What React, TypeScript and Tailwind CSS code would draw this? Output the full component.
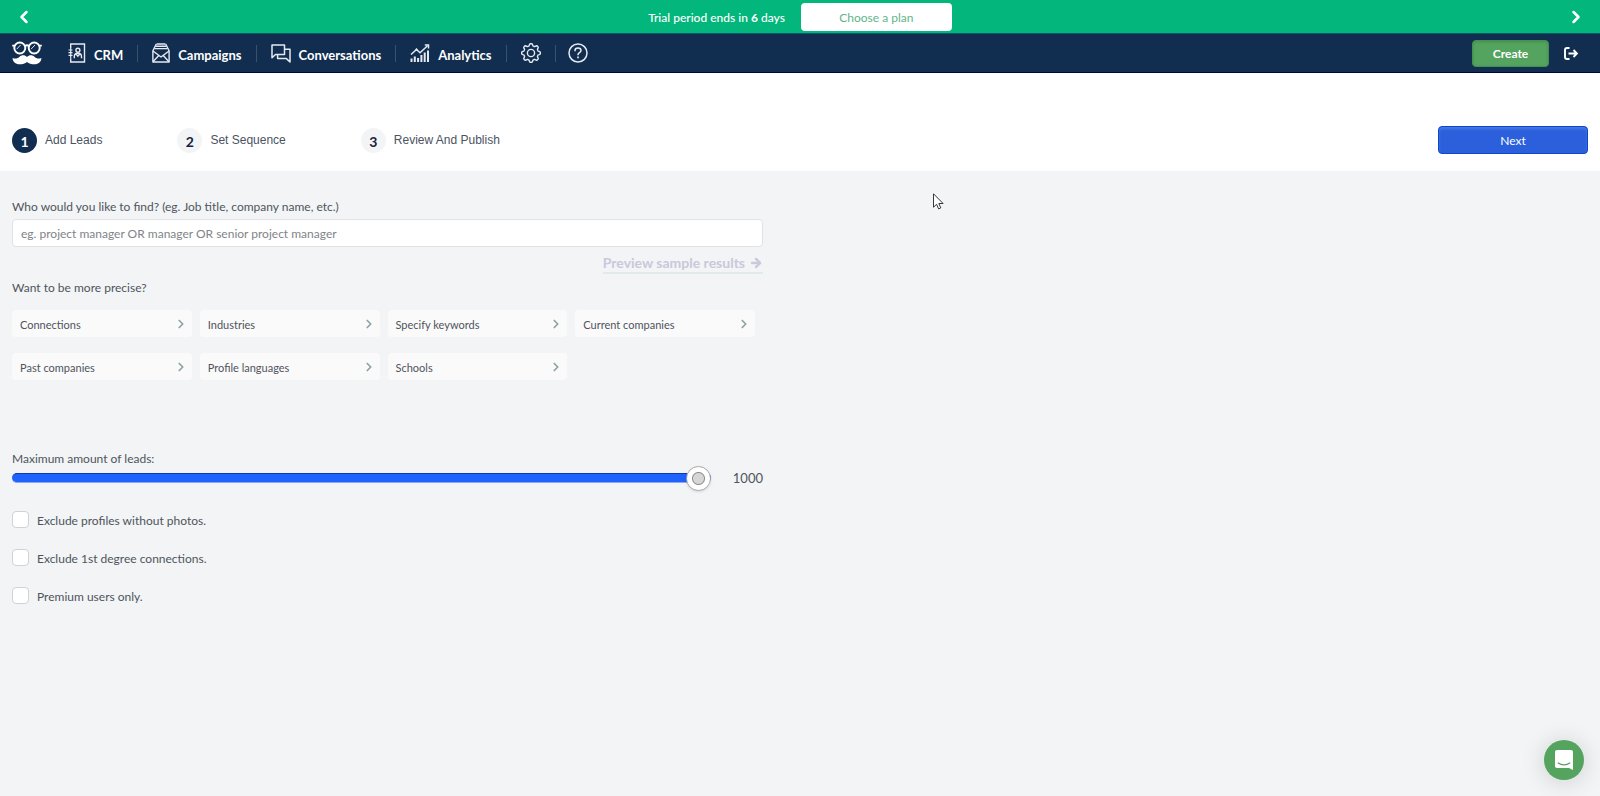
import { useState } from 'react';
import type { ReactNode } from 'react';

// Icons
import { ChevronLeft, ChevronRight, ArrowRight } from 'lucide-react';

const LogoIcon = () => (
  <svg viewBox="0 0 30 24" className="w-[30px] h-6" fill="none">
    <g stroke="#fff" strokeWidth="1.9">
      <circle cx="7.800" cy="7" r="5.500" />
      <circle cx="22.200" cy="7" r="5.500" />
      <path d="M0.200 4.600h3M26.800 4.600h3M12.800 5c1.300-1 3.100-1 4.400 0" />
    </g>
    <path d="M5 7.800l3.400-3.600M19.400 7.800l3.400-3.600" stroke="#dfe5ec" strokeWidth="1" strokeLinecap="round" />
    <path
      d="M15 16C13 13.600 9.500 13.600 7.600 15.700 6 17.400 3.600 18.100.600 17 .500 20.400 3.500 23.300 7.500 23.300c3.200 0 5.800-.8 7.500-2.400 1.700 1.600 4.300 2.400 7.500 2.400 4 0 7-2.900 6.900-6.300-3 1.100-5.400.4-7-1.300C20.500 13.600 17 13.600 15 16z"
      fill="#fff"
    />
  </svg>
);

const CrmIcon = () => (
  <svg viewBox="0 0 18 20" className="w-[18px] h-5" fill="none" stroke="#e6eaf0" strokeWidth="1.400">
    <path d="M2.700 5V1h13.800v18H2.700v-3.500" />
    <path d="M0.500 7h4M0.500 9.700h4M0.500 12.400h4M2.700 5v10.500" strokeWidth="1.200" />
    <circle cx="9.900" cy="7.200" r="2" />
    <path d="M6.300 15.200v-1.800c0-2 1.600-3.200 3.600-3.200s3.600 1.200 3.600 3.200v1.800M8 11l1.900 2.200 1.900-2.200" />
  </svg>
);

const CampaignsIcon = () => (
  <svg viewBox="0 0 18 20" className="w-[18px] h-5" fill="none" stroke="#e6eaf0" strokeWidth="1.400" strokeLinejoin="round">
    <path d="M4.500 1h9M3.600 3.300h10.800M2.500 5.600h13" />
    <path d="M4.300 1L0.900 7.700V19h16.200V7.700L13.700 1" />
    <path d="M1 8l8 6 8-6M1 18.800l5.800-6.200M17 18.800l-5.800-6.200" />
  </svg>
);

const ConversationsIcon = () => (
  <svg viewBox="0 0 20 19" className="w-5 h-[19px]" fill="none" stroke="#e6eaf0" strokeWidth="1.500" strokeLinejoin="round">
    <path d="M1 1h12.500v9.500H4.500L1 13.800z" />
    <path d="M13.800 5.200H19V18l-3.600-3.400H6.600v-4" />
  </svg>
);

const AnalyticsIcon = () => (
  <svg viewBox="0 0 20 19" className="w-5 h-[19px]" fill="none" stroke="#e6eaf0">
    <path d="M1.500 14.500V18M4.800 12.500V18M8.100 14v4M11.400 11V18M14.700 8.500V18M18 6.500V18" strokeWidth="2" />
    <path d="M1 10.500l5.500-5 3.500 3.300L17.500 1.800" strokeWidth="1.500" />
    <path d="M14.800 1h3.700v3.600" strokeWidth="1.500" />
    <circle cx="6.500" cy="5.500" r="0.800" />
  </svg>
);

// Eight rounded teeth around the centre
const gearPoints = Array.from({ length: 96 }, (_, i) => {
  const angle = (i / 96) * Math.PI * 2;
  const radius = 8.3 + 1.1 * Math.tanh(2 * Math.cos(8 * angle));
  return `${(10 + radius * Math.sin(angle)).toFixed(2)},${(10 - radius * Math.cos(angle)).toFixed(2)}`;
}).join(' ');

const GearIcon = () => (
  <svg viewBox="0 0 20 20" className="size-5" fill="none" stroke="#e6eaf0" strokeWidth="1.400" strokeLinejoin="round">
    <polygon points={gearPoints} />
    <circle cx="10" cy="10" r="3.600" />
  </svg>
);

const HelpIcon = () => (
  <svg viewBox="0 0 20 20" className="size-5" fill="none" stroke="#e6eaf0" strokeWidth="1.500">
    <circle cx="10" cy="10" r="9" />
    <path d="M7 8.200V7.500c0-1.400 1.300-2.500 3-2.500s3 1 3 2.500c0 2.300-3 2-3 4.300v.5" />
    <path d="M10 13.600v1.700" strokeWidth="1.700" />
  </svg>
);

const LogoutIcon = () => (
  <svg viewBox="0 0 14 13" className="w-3.5 h-[13px]" fill="none" stroke="#fff" strokeWidth="1.900">
    <path d="M5.500 1H3C1.600 1 1 1.600 1 3v7c0 1.400.6 2 2 2h2.500" />
    <path d="M4.500 6.500H13M9.500 3l3.400 3.500L9.500 10" />
  </svg>
);

const ChatIcon = () => (
  <svg viewBox="0 0 18 20" className="w-[18px] h-5" fill="none">
    <path d="M2 0h14c1.200 0 2 .8 2 2v18l-4-2H2c-1.200 0-2-.8-2-2V2C0 .8.800 0 2 0z" fill="#fff" />
    <path d="M3.200 13c3.200 2.400 8.400 2.400 11.600 0" stroke="#54a35e" strokeWidth="1.200" strokeLinecap="round" />
  </svg>
);

const CursorIcon = () => (
  <svg viewBox="0 0 11 17" className="w-[11px] h-[17px]">
    <path d="M.5.800v13.400l3.100-2.900 2 4.600 2.200-1-2-4.400h4.300z" fill="#fff" stroke="#222" strokeWidth="0.900" />
  </svg>
);

type NavItemProps = { icon: ReactNode; label?: string; title: string };

const NavItem = ({ icon, label, title }: NavItemProps) => (
  <a href="#" aria-label={title} className="flex items-center px-3.5 last:px-3 not-first:border-l border-[#3c5068] h-[17px] gap-2">
    {icon}
    {label && <span className="mt-1">{label}</span>}
  </a>
);

const navItems: NavItemProps[] = [
  { icon: <CrmIcon />, label: 'CRM', title: 'CRM' },
  { icon: <CampaignsIcon />, label: 'Campaigns', title: 'Campaigns' },
  { icon: <ConversationsIcon />, label: 'Conversations', title: 'Conversations' },
  { icon: <AnalyticsIcon />, label: 'Analytics', title: 'Analytics' },
  { icon: <GearIcon />, title: 'Settings' },
  { icon: <HelpIcon />, title: 'Help' },
];

const steps = ['Add Leads', 'Set Sequence', 'Review And Publish'];

const filters = [
  'Connections',
  'Industries',
  'Specify keywords',
  'Current companies',
  'Past companies',
  'Profile languages',
  'Schools',
];

const options = ['Exclude profiles without photos.', 'Exclude 1st degree connections.', 'Premium users only.'];

export default function App() {
  const [maxLeads, setMaxLeads] = useState(1000);

  return (
    <div className="min-h-screen bg-[#f2f4f6] font-['Lato',sans-serif] text-xs leading-4 text-[#4f545c]">
      {/* Trial banner */}
      <div className="flex items-center justify-between h-[33px] px-3.5 bg-[#03b67c] text-white">
        <button aria-label="Previous"><ChevronLeft className="size-5" strokeWidth={3} /></button>
        <div className="flex items-center gap-4">
          <span className="font-medium mt-0.5">Trial period ends in <b>6</b> days</span>
          <button className="w-[151px] h-7 pt-0.5 rounded-sm bg-white text-[#60b58a]">Choose a plan</button>
        </div>
        <button aria-label="Next message"><ChevronRight className="size-5" strokeWidth={3} /></button>
      </div>

      {/* Main navigation */}
      <header className="flex items-center justify-between h-10 pl-3 pr-[22px] bg-[#112e51] border-t border-b border-t-[#0a5a63] border-b-[#03063a] text-white">
        <div className="flex items-center">
          <a href="#" aria-label="Home"><LogoIcon /></a>
          <nav className="flex items-center ml-3 text-[13px] font-bold">
            {navItems.map((item) => (
              <NavItem key={item.title} {...item} />
            ))}
          </nav>
        </div>
        <div className="flex items-center gap-[15px]">
          <button className="w-[77px] h-[27px] pt-0.5 rounded-sm bg-[#54a35e] border border-[#468f52] shadow-[inset_0_1px_3px_#458f50] font-bold">Create</button>
          <button aria-label="Log out"><LogoutIcon /></button>
        </div>
      </header>

      {/* Steps */}
      <section className="flex items-end justify-between h-[98px] px-3 pb-[17px] bg-white">
        <ol className="flex items-center h-7 gap-[75px]">
          {steps.map((step, index) => (
            <li key={step} className="flex items-center gap-2">
              <span
                className={
                  index === 0
                    ? 'flex items-center justify-center size-[25px] pt-1 rounded-full bg-[#112e51] text-white text-sm font-bold'
                    : 'flex items-center justify-center size-[25px] pt-1 rounded-full bg-[#f2f4f6] text-[#16213f] text-sm font-bold'
                }
              >
                {index + 1}
              </span>
              <span className="font-['Liberation_Sans',sans-serif] text-xs text-[#4a5362]">{step}</span>
            </li>
          ))}
        </ol>
        <button className="w-[150px] h-7 pt-0.5 rounded-sm border border-[#0b47c8] bg-[#2b5fdb] shadow-[inset_0_2px_3px_#4a7ae6] text-white">Next</button>
      </section>

      {/* Lead search form */}
      <form className="w-[48%] pl-3 pr-[5px] pt-7">
        <label htmlFor="query" className="block">Who would you like to find? (eg. Job title, company name, etc.)</label>
        <input
          id="query"
          type="text"
          placeholder="eg. project manager OR manager OR senior project manager"
          className="block w-full h-7 mt-1 px-2 rounded-sm border border-[#dfe2e6] bg-white placeholder:text-[#808489]"
        />
        <div className="flex justify-end mt-2">
          <a href="#" className="flex items-center gap-1 h-[19px] pb-px border-b-2 border-[#e1e9e9] text-sm leading-4 font-bold text-[#c8c9da]">
            Preview sample results
            <ArrowRight className="size-3.5" strokeWidth={4} />
          </a>
        </div>

        <p className="mt-1.5">Want to be more precise?</p>
        <div className="grid grid-cols-4 gap-x-2 gap-y-4 mt-3.5 mr-2 text-[11px]">
          {filters.map((filter) => (
            <button key={filter} type="button" className="flex items-center justify-between h-[27px] pl-2 pr-1 rounded-sm bg-[#fafafa]">
              <span className="mt-0.5">{filter}</span>
              <ChevronRight className="size-3.5 text-[#8fa3a5]" strokeWidth={3} />
            </button>
          ))}
        </div>

        <label htmlFor="max-leads" className="block mt-[71px]">Maximum amount of leads:</label>
        <div className="flex items-center h-[22px]">
          <input
            id="max-leads"
            type="range"
            min={0}
            max={1000}
            value={maxLeads}
            onChange={(e) => setMaxLeads(Number(e.target.value))}
            className="grow h-2.5 appearance-none rounded-full border-t border-b border-t-[#0b3bb5] border-b-[#8ea6fa] bg-[#1f63fd] [&::-webkit-slider-thumb]:appearance-none [&::-webkit-slider-thumb]:size-[25px] [&::-webkit-slider-thumb]:rounded-full [&::-webkit-slider-thumb]:border [&::-webkit-slider-thumb]:border-[#a9a9a9] [&::-webkit-slider-thumb]:shadow-sm [&::-webkit-slider-thumb]:bg-[radial-gradient(circle,#d6d6d6_5px,#8c8c8c_6px,#8c8c8c_6px,#fff_7px)]"
          />
          <output htmlFor="max-leads" className="w-[52px] text-right text-[13px]">{maxLeads}</output>
        </div>

        <div className="flex flex-col gap-[21px] mt-[22px]">
          {options.map((option) => (
            <label key={option} className="flex items-center gap-2">
              <input type="checkbox" className="appearance-none size-[17px] rounded-sm border border-[#ced2d9] bg-white checked:bg-[#1f63fd]" />
              <span className="mt-0.5 leading-[15px]">{option}</span>
            </label>
          ))}
        </div>
      </form>

      {/* Chat launcher */}
      <button aria-label="Open chat" className="fixed right-4 bottom-4 flex items-center justify-center size-10 rounded-full bg-[#54a35e] shadow-[0_2px_24px_#00000028]">
        <ChatIcon />
      </button>

      {/* Pointer */}
      <div className="absolute top-[193px] left-[933px]">
        <CursorIcon />
      </div>
    </div>
  );
}
